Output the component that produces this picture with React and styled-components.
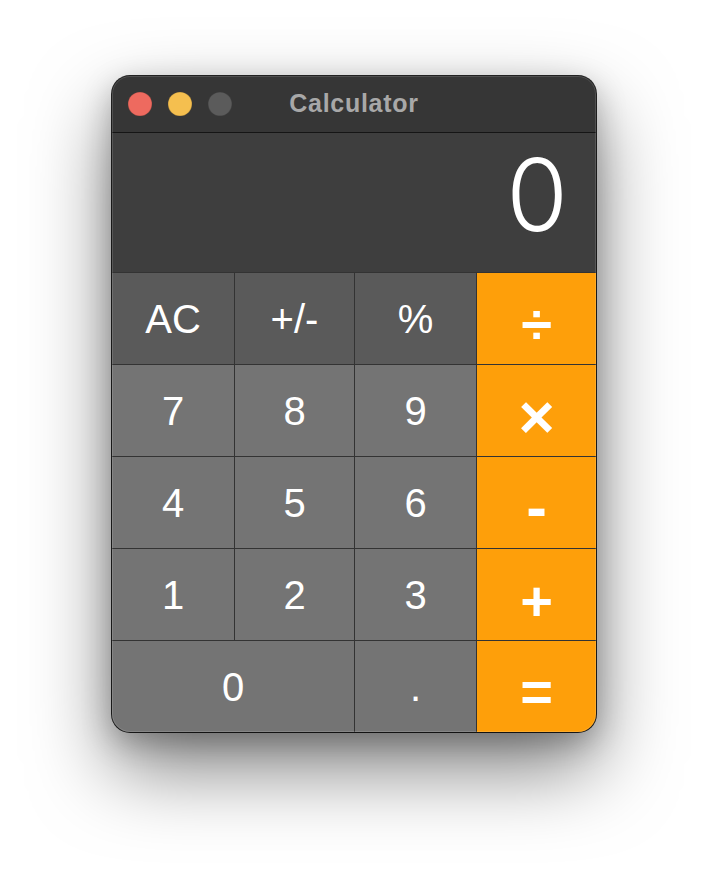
import React from 'react';
import styled, { createGlobalStyle } from 'styled-components';

const Global = createGlobalStyle`
  html, body { margin: 0; padding: 0; background: #ffffff; }
  body { font-family: "Liberation Sans", Arial, sans-serif; }
`;

const Page = styled.div`
  width: 708px;
  height: 880px;
  box-sizing: border-box;
  padding-top: 76px;
  display: flex;
  justify-content: center;
  align-items: flex-start;
`;

const Window = styled.div`
  position: relative;
  width: 484px;
  height: 656px;
  border-radius: 18px;
  overflow: hidden;
  background: #333333;
  display: flex;
  flex-direction: column;
  box-shadow: 0 0 0 1px rgba(0, 0, 0, 0.85), 0 36px 80px rgba(0, 0, 0, 0.5),
    0 10px 30px rgba(0, 0, 0, 0.25);
  &::after {
    content: "";
    position: absolute;
    inset: 0;
    border-radius: 18px;
    border: 1px solid rgba(255, 255, 255, 0.13);
    pointer-events: none;
  }
`;

const TitleBar = styled.div`
  height: 56px;
  flex: none;
  background: #363636;
  border-bottom: 1px solid #151515;
  display: grid;
  grid-template-columns: 1fr auto 1fr;
  align-items: center;
`;

const Lights = styled.div`
  display: flex;
  gap: 16px;
  padding-left: 16px;
`;

const Light = styled.span`
  width: 24px;
  height: 24px;
  border-radius: 50%;
  background: ${(p) => p.$color};
  box-shadow: inset 0 0 0 0.5px rgba(0, 0, 0, 0.2);
`;

const Title = styled.div`
  font-family: "Liberation Sans", Arial, sans-serif;
  font-weight: 700;
  font-size: 25px;
  letter-spacing: 0.7px;
  color: #a8a8a8;
  padding-bottom: 2px;
`;

const Display = styled.div`
  height: 139px;
  flex: none;
  background: #3e3e3e;
  display: flex;
  justify-content: flex-end;
  align-items: center;
  padding: 0 28px 16px 0;
  box-sizing: border-box;
`;

const Readout = styled.div`
  font-family: Inter, Roboto, "Liberation Sans", sans-serif;
  font-weight: 300;
  font-size: 100px;
  line-height: 1;
  color: #ffffff;
`;

const Keys = styled.div`
  flex: 1;
  display: grid;
  grid-template-columns: 122px 119px 121px 1fr;
  grid-template-rows: repeat(5, 1fr);
  gap: 1px;
  padding-top: 1px;
  background: #333333;
`;

const colors = {
  fn: '#5a5a5a',
  num: '#747474',
  op: '#fe9f0a',
};

const Key = styled.div`
  background: ${(p) => colors[p.$kind]};
  grid-column: span ${(p) => p.$span || 1};
  display: flex;
  justify-content: center;
  align-items: center;
  color: #ffffff;
  font-family: "Liberation Sans", Arial, sans-serif;
  font-size: 40px;
  font-weight: 400;
  line-height: 1;
  user-select: none;
`;

const OpLabel = styled.span`
  font-size: ${(p) => p.$size}px;
  font-weight: ${(p) => p.$weight};
  padding-top: ${(p) => p.$drop}px;
  line-height: 1;
`;

const rows = [
  [['AC', 'fn'], ['+/-', 'fn'], ['%', 'fn'], ['÷', 'op', 1, 56, 700, 12]],
  [['7', 'num'], ['8', 'num'], ['9', 'num'], ['×', 'op', 1, 62, 700, 12]],
  [['4', 'num'], ['5', 'num'], ['6', 'num'], ['-', 'op', 1, 62, 700, 8]],
  [['1', 'num'], ['2', 'num'], ['3', 'num'], ['+', 'op', 1, 56, 700, 12]],
  [['0', 'num', 2], ['.', 'num'], ['=', 'op', 1, 56, 700, 10]],
];

export default function App() {
  return (
    <>
      <Global />
      <Page>
        <Window>
          <TitleBar>
            <Lights>
              <Light $color="#ee6a5f" />
              <Light $color="#f5bf4f" />
              <Light $color="#5b5b5b" />
            </Lights>
            <Title>Calculator</Title>
            <div />
          </TitleBar>
          <Display>
            <Readout>0</Readout>
          </Display>
          <Keys>
            {rows.flat().map(([label, kind, span, size, weight, drop], i) => (
              <Key key={i} $kind={kind} $span={span}>
                {kind === 'op' ? (
                  <OpLabel $size={size} $weight={weight} $drop={drop}>
                    {label}
                  </OpLabel>
                ) : (
                  label
                )}
              </Key>
            ))}
          </Keys>
        </Window>
      </Page>
    </>
  );
}
